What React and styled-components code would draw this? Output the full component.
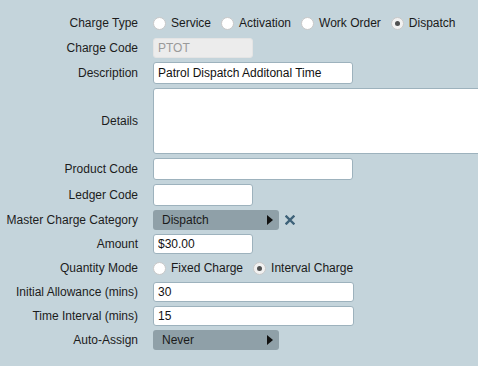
import React from 'react';
import styled, { createGlobalStyle } from 'styled-components';

const Global = createGlobalStyle`
  html, body {
    margin: 0;
    padding: 0;
    background: #c4d4db;
  }
  body {
    font-family: "Liberation Sans", Arial, sans-serif;
    font-size: 12px;
    color: #1c1c1c;
  }
`;

const Form = styled.div`
  display: grid;
  grid-template-columns: 138px 1fr;
  grid-auto-rows: auto;
  align-content: start;
  column-gap: 15px;
  row-gap: 4px;
  padding-top: 12px;
  width: 478px;
  height: 366px;
  box-sizing: border-box;
  overflow: hidden;
`;

const Label = styled.div`
  display: flex;
  align-items: center;
  justify-content: flex-end;
  white-space: nowrap;
  height: ${p => p.h || 20}px;
`;

const Field = styled.div`
  display: flex;
  align-items: center;
  height: ${p => p.h || 20}px;
  min-width: 0;
`;

const TextInput = styled.input`
  box-sizing: border-box;
  width: ${p => p.w}px;
  height: 100%;
  margin: 0;
  padding: 0 4px;
  border: 1px solid ${p => (p.disabled ? '#e4e4e4' : '#9db2bd')};
  border-radius: 3px;
  background: ${p => (p.disabled ? '#ececec' : '#fff')};
  color: ${p => (p.disabled ? '#9a9a9a' : '#111')};
  font-family: "Liberation Sans", Arial, sans-serif;
  font-size: 12px;
  outline: none;
`;

const TextArea = styled.textarea`
  box-sizing: border-box;
  width: 360px;
  flex-shrink: 0;
  height: 100%;
  margin: 0;
  border: 1px solid #9db2bd;
  border-radius: 3px;
  background: #fff;
  resize: none;
  outline: none;
`;

const RadioGroup = styled.div`
  display: flex;
  align-items: center;
  gap: 10px;
`;

const RadioItem = styled.label`
  display: flex;
  align-items: center;
  gap: 5px;
  color: #1a1a1a;
`;

const RadioDot = styled.span`
  box-sizing: border-box;
  width: 13px;
  height: 13px;
  border-radius: 50%;
  border: 1px solid #c8c8c8;
  background: ${p => (p.checked ? '#f1f1f1' : '#fff')};
  display: flex;
  align-items: center;
  justify-content: center;

  &::after {
    content: '';
    width: 5px;
    height: 5px;
    border-radius: 50%;
    background: ${p => (p.checked ? '#505050' : 'transparent')};
  }
`;

const Select = styled.div`
  box-sizing: border-box;
  width: 126px;
  height: 100%;
  border-radius: 3px;
  background: #8fa0a8;
  display: flex;
  align-items: center;
  justify-content: space-between;
  padding: 0 6px 0 9px;
  color: #1a1a1a;
  font-size: 12px;
`;

const Arrow = styled.span`
  width: 0;
  height: 0;
  border-top: 5px solid transparent;
  border-bottom: 5px solid transparent;
  border-left: 6px solid #111;
`;

const Clear = styled.span`
  margin-left: 6px;
  display: flex;
  align-items: center;
`;

const Radio = ({ label, checked }) => (
  <RadioItem>
    <RadioDot checked={checked} />
    {label}
  </RadioItem>
);

export default function App() {
  return (
    <>
      <Global />
      <Form>
        <Label h={22}>Charge Type</Label>
        <Field h={22}>
          <RadioGroup>
            <Radio label="Service" />
            <Radio label="Activation" />
            <Radio label="Work Order" />
            <Radio label="Dispatch" checked />
          </RadioGroup>
        </Field>

        <Label>Charge Code</Label>
        <Field>
          <TextInput w={100} disabled defaultValue="PTOT" />
        </Field>

        <Label h={22}>Description</Label>
        <Field h={22}>
          <TextInput w={200} defaultValue="Patrol Dispatch Additonal Time" />
        </Field>

        <Label h={66}>Details</Label>
        <Field h={66}>
          <TextArea />
        </Field>

        <Label h={22}>Product Code</Label>
        <Field h={22}>
          <TextInput w={200} />
        </Field>

        <Label h={22}>Ledger Code</Label>
        <Field h={22}>
          <TextInput w={100} />
        </Field>

        <Label>Master Charge Category</Label>
        <Field>
          <Select>
            Dispatch
            <Arrow />
          </Select>
          <Clear>
            <svg width="10" height="10" viewBox="0 0 10 10">
              <path d="M1.5 1.5 L8.5 8.5 M8.5 1.5 L1.5 8.5" stroke="#3e6279" strokeWidth="2.4" strokeLinecap="square" />
            </svg>
          </Clear>
        </Field>

        <Label>Amount</Label>
        <Field>
          <TextInput w={100} defaultValue="$30.00" />
        </Field>

        <Label>Quantity Mode</Label>
        <Field>
          <RadioGroup>
            <Radio label="Fixed Charge" />
            <Radio label="Interval Charge" checked />
          </RadioGroup>
        </Field>

        <Label>Initial Allowance (mins)</Label>
        <Field>
          <TextInput w={201} defaultValue="30" />
        </Field>

        <Label>Time Interval (mins)</Label>
        <Field>
          <TextInput w={201} defaultValue="15" />
        </Field>

        <Label>Auto-Assign</Label>
        <Field>
          <Select>
            Never
            <Arrow />
          </Select>
        </Field>
      </Form>
    </>
  );
}
